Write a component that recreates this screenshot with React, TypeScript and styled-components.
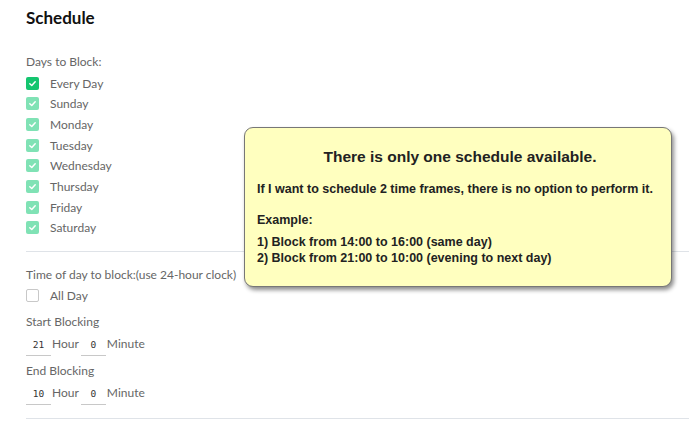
import React from 'react';
import styled, { createGlobalStyle } from 'styled-components';

const GlobalStyle = createGlobalStyle`
  html, body {
    margin: 0;
    padding: 0;
    background: #fff;
  }
  body {
    font-family: Lato, "Open Sans", sans-serif;
  }
`;

const Page = styled.div`
  position: relative;
  width: 689px;
  height: 440px;
  overflow: hidden;
  padding: 7px 0 0 26px;
  box-sizing: border-box;
`;

const Heading = styled.h1`
  margin: 0 0 25px;
  font-size: 17px;
  font-weight: 700;
  color: #111;
  line-height: 22px;
`;

const Label = styled.div<{ $top?: number; $gap?: number }>`
  font-size: 12px;
  color: #666;
  line-height: 16px;
  margin-top: ${p => p.$top ?? 0}px;
  margin-bottom: ${p => p.$gap ?? 5}px;
`;

const CheckList = styled.div`
  display: flex;
  flex-direction: column;
  gap: 4.7px;
`;

const CheckRow = styled.label`
  display: flex;
  align-items: center;
  gap: 11px;
  height: 16px;
  font-size: 12px;
  color: #666;
`;

const Box = styled.span<{ $state: 'on' | 'soft' | 'off' }>`
  width: 13px;
  height: 13px;
  border-radius: 2px;
  box-sizing: border-box;
  display: flex;
  align-items: center;
  justify-content: center;
  background: ${p => (p.$state === 'on' ? '#14c56f' : p.$state === 'soft' ? '#80e2b5' : '#fff')};
  border: ${p => (p.$state === 'off' ? '1px solid #c8c8c8' : 'none')};
`;

const Divider = styled.hr<{ $top: number; $bottom: number }>`
  border: none;
  border-top: 1px solid #dfe3e8;
  margin: ${p => p.$top}px 0 ${p => p.$bottom}px;
`;

const TimeRow = styled.div`
  display: flex;
  align-items: baseline;
  height: 18px;
  font-size: 12px;
  color: #666;
`;

const NumField = styled.span`
  width: 25px;
  border-bottom: 1px solid #c8c8c8;
  font-family: "DejaVu Sans Mono", monospace;
  font-size: 9.5px;
  color: #333;
  text-align: center;
  line-height: 14px;
  padding-bottom: 3px;
`;

const Unit = styled.span`
  line-height: 16px;
  margin: 0 2px 0 1px;
`;

const Note = styled.div`
  position: absolute;
  left: 244px;
  top: 127px;
  width: 428px;
  height: 160px;
  box-sizing: border-box;
  background: #ffffbf;
  border: 1px solid #777;
  border-radius: 9px;
  box-shadow: 2px 3px 4px rgba(0, 0, 0, 0.45);
  padding: 20px 8px 0 12px;
  font-family: "Liberation Sans", Arial, sans-serif;
  color: #222;
`;

const NoteTitle = styled.div`
  font-size: 15.5px;
  font-weight: 700;
  line-height: 18px;
  text-align: center;
  margin-bottom: 15px;
`;

const NoteText = styled.p<{ $gap: number }>`
  margin: 0 0 ${p => p.$gap}px;
  font-size: 12.5px;
  font-weight: 700;
  line-height: 16px;
`;

const Tick = () => (
  <svg width="9" height="9" viewBox="0 0 10 10">
    <path d="M2 5.2 L4.2 7.3 L8 3" stroke="#fff" strokeWidth="1.6" fill="none" strokeLinecap="round" strokeLinejoin="round" />
  </svg>
);

const days = ['Sunday', 'Monday', 'Tuesday', 'Wednesday', 'Thursday', 'Friday', 'Saturday'];

function TimePicker(props: { hour: number; minute: number }) {
  return (
    <TimeRow>
      <NumField>{props.hour}</NumField>
      <Unit>Hour</Unit>
      <NumField>{props.minute}</NumField>
      <Unit>Minute</Unit>
    </TimeRow>
  );
}

export default function App() {
  return (
    <>
      <GlobalStyle />
      <Page>
        <Heading>Schedule</Heading>
        <Label>Days to Block:</Label>
        <CheckList>
          <CheckRow>
            <Box $state="on"><Tick /></Box>
            Every Day
          </CheckRow>
          {days.map(d => (
            <CheckRow key={d}>
              <Box $state="soft"><Tick /></Box>
              {d}
            </CheckRow>
          ))}
        </CheckList>
        <Divider $top={15} $bottom={15} />
        <Label>Time of day to block:(use 24-hour clock)</Label>
        <CheckList>
          <CheckRow>
            <Box $state="off" />
            All Day
          </CheckRow>
        </CheckList>
        <Label $top={10} $gap={6}>Start Blocking</Label>
        <TimePicker hour={21} minute={0} />
        <Label $top={9} $gap={6}>End Blocking</Label>
        <TimePicker hour={10} minute={0} />
        <Divider $top={15} $bottom={0} />
        <Note>
          <NoteTitle>There is only one schedule available.</NoteTitle>
          <NoteText $gap={15}>If I want to schedule 2 time frames, there is no option to perform it.</NoteText>
          <NoteText $gap={6}>Example:</NoteText>
          <NoteText $gap={0}>
            1) Block from 14:00 to 16:00 (same day)
            <br />
            2) Block from 21:00 to 10:00 (evening to next day)
          </NoteText>
        </Note>
      </Page>
    </>
  );
}
